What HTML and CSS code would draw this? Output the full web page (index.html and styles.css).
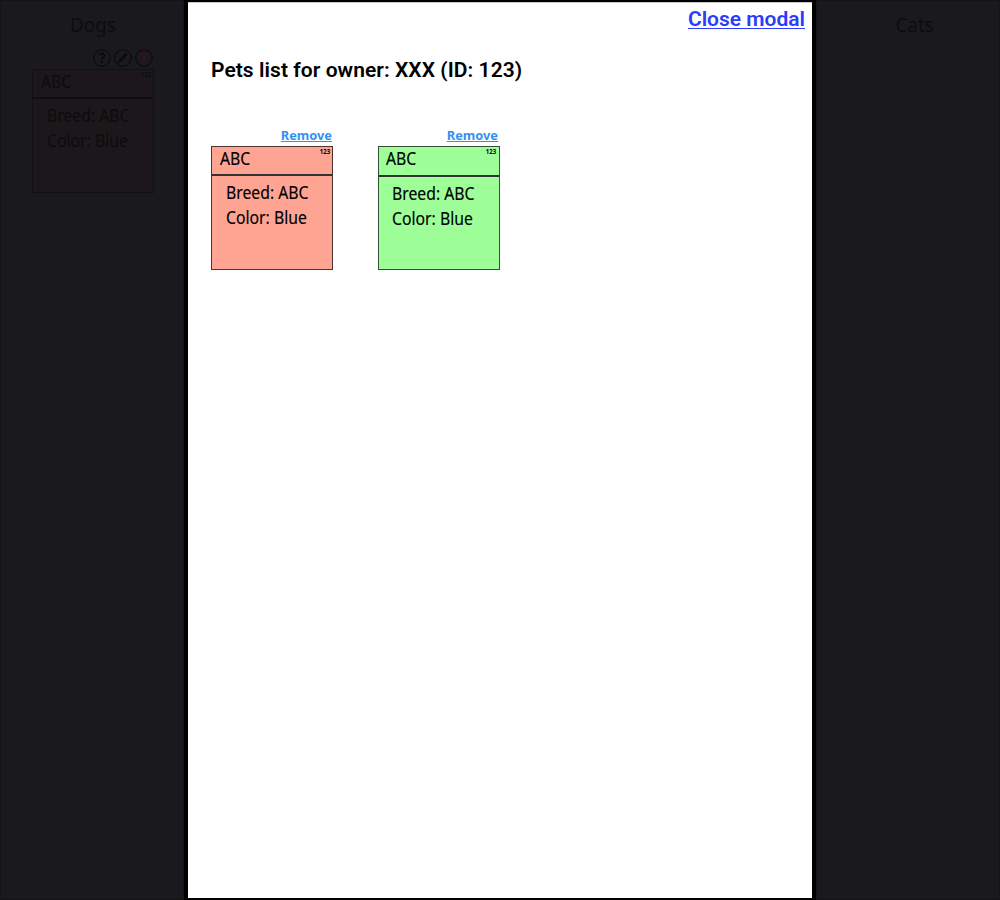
FILE: index.html
```html
<!DOCTYPE html>
<html lang="en">
<head>
<meta charset="utf-8">
<title>Pets</title>
<link rel="stylesheet" href="styles.css">
</head>
<body>
<div class="page">
  <section class="column">
    <h2 class="column-title">Dogs</h2>
    <div class="column-pet">
      <div class="tools">
        <svg class="tool" viewBox="0 0 18 18"><circle cx="9" cy="9" r="8.3"/><path d="M6.6 6C7.8 4 11.7 4.2 11.3 6.8C11 8.4 9.1 8.5 9 10.8" stroke-width="2"/><circle cx="9" cy="13.2" r=".6"/></svg>
        <svg class="tool" viewBox="0 0 18 18"><circle cx="9" cy="9" r="8.3"/><path d="M5.7 12.2L12.6 4.9" stroke-width="2.8"/><path d="M4.2 13.8L6 12"/></svg>
        <svg class="tool" viewBox="0 0 18 18"><circle cx="9" cy="9" r="8.3"/><path class="cross" d="M6 4L12 14M12 4L6 14"/></svg>
      </div>
      <article class="card dim">
        <header class="card-head"><span class="name">ABC</span><span class="num">123</span></header>
        <div class="card-body"><p class="breed">Breed: ABC</p><p class="color">Color: Blue</p></div>
      </article>
    </div>
  </section>
  <main class="modal">
    <div class="modal-top"><a class="close" href="#">Close modal</a></div>
    <h1 class="title">Pets list for owner: XXX (ID: 123)</h1>
    <div class="pets">
      <div class="pet">
        <a class="remove" href="#">Remove</a>
        <article class="card red">
          <header class="card-head"><span class="name">ABC</span><span class="num">123</span></header>
          <div class="card-body"><p class="breed">Breed: ABC</p><p class="color">Color: Blue</p></div>
        </article>
      </div>
      <div class="pet">
        <a class="remove" href="#">Remove</a>
        <article class="card green">
          <header class="card-head"><span class="name">ABC</span><span class="num">123</span></header>
          <div class="card-body"><p class="breed">Breed: ABC</p><p class="color">Color: Blue</p></div>
        </article>
      </div>
    </div>
  </main>
  <section class="column">
    <h2 class="column-title cats">Cats</h2>
  </section>
</div>
</body>
</html>
```
FILE: styles.css
```css
* { box-sizing: border-box; }
body { margin: 0; background: #000; font-family: "Noto Sans", "Open Sans", sans-serif; }
h1, h2, p { margin: 0; font-weight: 400; }
.page { display: grid; grid-template-columns: 184px 624px 184px; column-gap: 4px; height: 900px; }
.column { background: #1a191e; border: 1px solid #151417; color: #0d0d0f; }
.column-title { margin-top: 10px; padding-left: 2px; text-align: center; font-size: 20px; line-height: 28px; transform: scaleX(.94); }
.cats { padding-left: 14px; }
.column-pet { width: 122px; margin: 10px 0 0 31px; }
.tools { display: flex; justify-content: flex-end; gap: 3px; height: 20px; padding-right: 1px; }
.tool { width: 18px; height: 18px; fill: none; stroke: #0b0b0d; stroke-width: 1.1; }
.tool .cross { stroke: #2d171b; stroke-width: 2.4; }
.modal { margin: 2px 0; background: #fff; border-top: 1px solid #c8c8c8; font-family: Roboto, sans-serif; }
.modal-top { display: flex; justify-content: flex-end; padding: 3px 7px 0 0; height: 52px; }
.close { color: #2b3cfa; font-size: 21px; line-height: 26px; font-weight: 600; height: 26px; text-decoration-thickness: 1px; text-underline-offset: 2px; }
.title { padding-left: 23px; font-size: 21px; line-height: 30px; font-weight: 600; letter-spacing: .06px; color: #000; }
.pets { display: flex; gap: 44.5px; padding: 41px 0 0 23px; font-family: "Noto Sans", sans-serif; }
.pet { display: flex; flex-direction: column; width: 122px; }
.remove { align-self: flex-end; margin-right: 1px; height: 20px; font-size: 13px; line-height: 18px; font-weight: 700; color: #348ff6; text-decoration-thickness: 1px; text-underline-offset: 1px; transform: scaleX(.985); transform-origin: right; }
.card { width: 122px; height: 124px; border: 1px solid #4a3533; color: #000; }
.card-head { display: flex; justify-content: space-between; height: 29px; padding: 0 2px 0 8px; border-bottom: 2px solid #333; }
.name { font-size: 17.5px; line-height: 23px; transform: scaleX(.9); transform-origin: left; -webkit-text-stroke: .15px currentColor; }
.num { font-size: 6.5px; line-height: 9px; font-weight: 700; transform: scaleX(.93); transform-origin: right; }
.card-body { padding: 4px 0 0 14px; font-size: 17.5px; line-height: 25px; white-space: nowrap; }
.breed, .color { transform: scaleX(.9); transform-origin: left; -webkit-text-stroke: .15px currentColor; }
.red { background: #ffa493; }
.green { background: #9eff98; border-color: #345034; }
.green .card-head { height: 30px; padding-left: 7px; }
.green .card-body { padding-left: 13px; }
.dim { background: #1c171a; border-color: #111114; color: #0d0d0f; }
.dim .card-head { border-color: #0e0e10; }
```
